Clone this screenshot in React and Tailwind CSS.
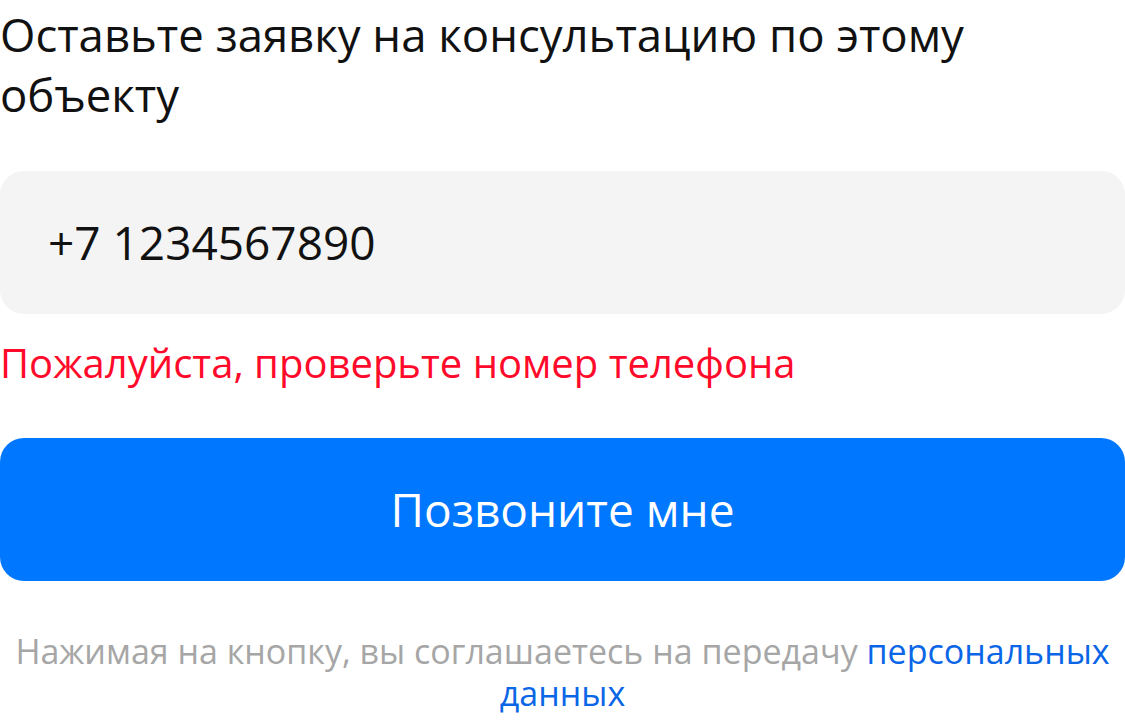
export default function App() {
  return (
    <div className="w-[1125px] h-[720px] bg-white overflow-hidden font-['Open_Sans',sans-serif]">
      <h2 className="text-[45.5px] leading-[60px] text-[#111] pt-[4px]">
        Оставьте заявку на консультацию по этому объекту
      </h2>
      <div className="mt-[47px] h-[143px] rounded-[24px] bg-[#f4f4f4] flex items-center px-[48px]">
        <span className="text-[46px] text-[#111]">+7 1234567890</span>
      </div>
      <p className="mt-[26px] text-[40px] leading-[46px] text-[#ff0a2a]">
        Пожалуйста, проверьте номер телефона
      </p>
      <button className="mt-[52px] w-full h-[143px] rounded-[24px] bg-[#0077ff] text-white text-[46px] flex items-center justify-center">
        Позвоните мне
      </button>
      <p className="mt-[49px] text-center text-[34px] leading-[42px] text-[#a6a6a6]">
        Нажимая на кнопку, вы соглашаетесь на передачу{" "}
        <span className="text-[#0a66e6]">персональных</span>{" "}
        <span className="text-[#0a66e6]">данных</span>
      </p>
    </div>
  );
}
